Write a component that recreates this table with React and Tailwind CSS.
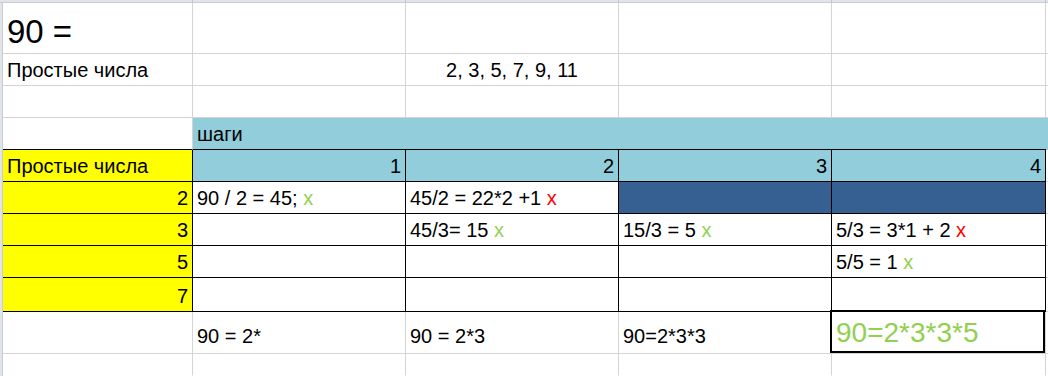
import React from "react";

const FONT = { fontFamily: '"Liberation Sans", Arial, sans-serif' };

const GR = "border-r-[#d4d4d4]";
const GB = "border-b-[#d4d4d4]";
const KR = "border-r-black";
const KB = "border-b-black";

const WA = "w-[190px]";
const WN = "w-[213px]";
const WE = "w-[214px]";

function Cell({ w, r = GR, b = GB, fill = "bg-white", align = "left", pad = "pb-[5px]", text = "text-[20px] leading-[20px]", className = "", children }) {
  const alignCls = align === "right" ? "justify-end pr-[4px]" : align === "center" ? "justify-center" : "justify-start pl-[4px]";
  return (
    <div className={`relative h-full shrink-0 border-r border-b flex items-end whitespace-nowrap text-black ${w} ${r} ${b} ${fill} ${alignCls} ${pad} ${text} ${className}`}>
      {children}
    </div>
  );
}

function Tail({ fill = "bg-white", b = "border-b border-b-[#d4d4d4]" }) {
  return <div className={`h-full flex-1 ${fill} ${b}`} />;
}

function Ok() {
  return <span className="text-[#92D050]">x</span>;
}

function No() {
  return <span className="text-[#FF0000]">x</span>;
}

const YELLOW = "bg-[#FFFF00]";
const SKY = "bg-[#92CDDC]";
const NAVY = "bg-[#366092]";

export default function App() {
  return (
    <div className="w-[1048px] h-[376px] overflow-hidden bg-white flex flex-col" style={FONT}>
      {/* column header strip */}
      <div className="h-[3px] shrink-0 flex bg-[#e1e4e9] border-b border-b-[#c8ccd2]">
        <div className="w-[3px] shrink-0" />
        <div className="w-[190px] shrink-0 border-r border-r-[#c3c7cd]" />
        <div className="w-[213px] shrink-0 border-r border-r-[#c3c7cd]" />
        <div className="w-[213px] shrink-0 border-r border-r-[#c3c7cd]" />
        <div className="w-[213px] shrink-0 border-r border-r-[#c3c7cd]" />
        <div className="w-[214px] shrink-0 border-r border-r-[#c3c7cd]" />
        <div className="flex-1" />
      </div>

      <div className="flex flex-1 min-h-0">
        {/* row header strip */}
        <div className="w-[3px] shrink-0 bg-[#e1e4e9] border-r border-r-[#c8ccd2]" />

        <div className="flex-1 flex flex-col min-w-0">
          {/* 1 */}
          <div className="h-[51px] shrink-0 flex">
            <Cell w={WA} text="text-[33px] leading-[33px]" pad="pb-[5px]">90 =</Cell>
            <Cell w={WN} />
            <Cell w={WN} />
            <Cell w={WN} />
            <Cell w={WE} />
            <Tail />
          </div>

          {/* 2 */}
          <div className="h-[32px] shrink-0 flex">
            <Cell w={WA}>Простые числа</Cell>
            <Cell w={WN} />
            <Cell w={WN} align="center">2, 3, 5, 7, 9, 11</Cell>
            <Cell w={WN} />
            <Cell w={WE} />
            <Tail />
          </div>

          {/* 3 */}
          <div className="h-[32px] shrink-0 flex">
            <Cell w={WA} />
            <Cell w={WN} />
            <Cell w={WN} />
            <Cell w={WN} />
            <Cell w={WE} />
            <Tail />
          </div>

          {/* 4: steps banner */}
          <div className="h-[32px] shrink-0 flex">
            <Cell w={WA} b={KB} />
            <div className={`h-full w-[853px] shrink-0 border-b ${KB} ${SKY} flex items-end pl-[4px] pb-[5px] text-[20px] leading-[20px] text-black`}>
              шаги
            </div>
            <Tail fill={SKY} b="" />
          </div>

          {/* 5: header */}
          <div className="h-[32px] shrink-0 flex">
            <Cell w={WA} r={KR} b={KB} fill={YELLOW}>Простые числа</Cell>
            <Cell w={WN} r={KR} b={KB} fill={SKY} align="right">1</Cell>
            <Cell w={WN} r={KR} b={KB} fill={SKY} align="right">2</Cell>
            <Cell w={WN} r={KR} b={KB} fill={SKY} align="right">3</Cell>
            <Cell w={WE} r={KR} b={KB} fill={SKY} align="right">4</Cell>
            <Tail />
          </div>

          {/* 6: divisor 2 */}
          <div className="h-[32px] shrink-0 flex">
            <Cell w={WA} r={KR} b={KB} fill={YELLOW} align="right">2</Cell>
            <Cell w={WN} r={KR} b={KB}>90 / 2 = 45;&nbsp;<Ok /></Cell>
            <Cell w={WN} r={KR} b={KB}>45/2 = 22*2 +1&nbsp;<No /></Cell>
            <Cell w={WN} r={KR} b={KB} fill={NAVY} />
            <Cell w={WE} r={KR} b={KB} fill={NAVY} />
            <Tail />
          </div>

          {/* 7: divisor 3 */}
          <div className="h-[32px] shrink-0 flex">
            <Cell w={WA} r={KR} b={KB} fill={YELLOW} align="right">3</Cell>
            <Cell w={WN} r={KR} b={KB} />
            <Cell w={WN} r={KR} b={KB}>45/3= 15&nbsp;<Ok /></Cell>
            <Cell w={WN} r={KR} b={KB}>15/3 = 5&nbsp;<Ok /></Cell>
            <Cell w={WE} r={KR} b={KB}>5/3 = 3*1 + 2&nbsp;<No /></Cell>
            <Tail />
          </div>

          {/* 8: divisor 5 */}
          <div className="h-[32px] shrink-0 flex">
            <Cell w={WA} r={KR} b={KB} fill={YELLOW} align="right">5</Cell>
            <Cell w={WN} r={KR} b={KB} />
            <Cell w={WN} r={KR} b={KB} />
            <Cell w={WN} r={KR} b={KB} />
            <Cell w={WE} r={KR} b={KB}>5/5 = 1&nbsp;<Ok /></Cell>
            <Tail />
          </div>

          {/* 9: divisor 7 */}
          <div className="h-[34px] shrink-0 flex">
            <Cell w={WA} r={KR} b={KB} fill={YELLOW} align="right">7</Cell>
            <Cell w={WN} r={KR} b={KB} />
            <Cell w={WN} r={KR} b={KB} />
            <Cell w={WN} r={KR} b={KB} />
            <Cell w={WE} r={KR} b={KB} />
            <Tail />
          </div>

          {/* 10: running product */}
          <div className="h-[42px] shrink-0 flex">
            <Cell w={WA} />
            <Cell w={WN} pad="pb-[7px]">90 = 2*</Cell>
            <Cell w={WN} pad="pb-[7px]">90 = 2*3</Cell>
            <Cell w={WN} pad="pb-[7px]">90=2*3*3</Cell>
            <Cell w={WE} pad="pb-[6px]" text="text-[28px] leading-[28px]" className="text-[#92D050]">
              <span className="text-[#92D050]">90=2*3*3*5</span>
              <div className="absolute -left-[2px] -top-[2px] right-0 bottom-0 border-2 border-black pointer-events-none" />
            </Cell>
            <Tail />
          </div>

          {/* 11 */}
          <div className="flex-1 flex">
            <Cell w={WA} b="border-b-transparent" />
            <Cell w={WN} b="border-b-transparent" />
            <Cell w={WN} b="border-b-transparent" />
            <Cell w={WN} b="border-b-transparent" />
            <Cell w={WE} b="border-b-transparent" />
            <Tail b="" />
          </div>
        </div>
      </div>
    </div>
  );
}
